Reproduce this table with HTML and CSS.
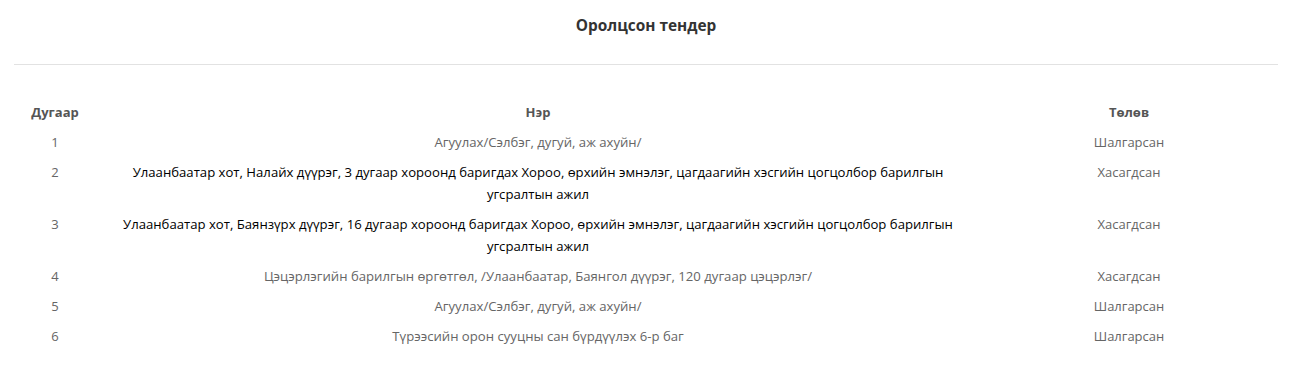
FILE: index.html
```html
<!DOCTYPE html>
<html lang="mn">
<head>
<meta charset="utf-8">
<title>Оролцсон тендер</title>
<link rel="stylesheet" href="styles.css">
</head>
<body>
<div class="panel">
  <h2 class="title">Оролцсон тендер</h2>
  <hr class="divider">
  <table class="tenders">
    <thead>
      <tr><th class="c-num">Дугаар</th><th class="c-name">Нэр</th><th class="c-status">Төлөв</th></tr>
    </thead>
    <tbody>
      <tr><td>1</td><td>Агуулах/Сэлбэг, дугуй, аж ахуйн/</td><td>Шалгарсан</td></tr>
      <tr class="dark"><td>2</td><td>Улаанбаатар хот, Налайх дүүрэг, 3 дугаар хороонд баригдах Хороо, өрхийн эмнэлэг, цагдаагийн хэсгийн цогцолбор барилгын угсралтын ажил</td><td>Хасагдсан</td></tr>
      <tr class="dark"><td>3</td><td>Улаанбаатар хот, Баянзүрх дүүрэг, 16 дугаар хороонд баригдах Хороо, өрхийн эмнэлэг, цагдаагийн хэсгийн цогцолбор барилгын угсралтын ажил</td><td>Хасагдсан</td></tr>
      <tr><td>4</td><td>Цэцэрлэгийн барилгын өргөтгөл, /Улаанбаатар, Баянгол дүүрэг, 120 дугаар цэцэрлэг/</td><td>Хасагдсан</td></tr>
      <tr><td>5</td><td>Агуулах/Сэлбэг, дугуй, аж ахуйн/</td><td>Шалгарсан</td></tr>
      <tr><td>6</td><td>Түрээсийн орон сууцны сан бүрдүүлэх 6-р баг</td><td>Шалгарсан</td></tr>
    </tbody>
  </table>
</div>
</body>
</html>
```
FILE: styles.css
```css
html, body {
  margin: 0;
  padding: 0;
  background: #fff;
}
body {
  font-family: "Open Sans", "Noto Sans", sans-serif;
  font-size: 13px;
  color: #666;
}
.panel {
  padding: 0 14px;
}
.title {
  margin: 0;
  padding-top: 13px;
  height: 25px;
  line-height: 25px;
  text-align: center;
  font-size: 15.4px;
  font-weight: 700;
  color: #333;
}
.divider {
  border: 0;
  border-top: 1px solid #e2e2e2;
  margin: 26px 0 0 0;
}
.tenders {
  width: 100%;
  border-collapse: collapse;
  margin-top: 32px;
}
.tenders th,
.tenders td {
  padding: 4px 8px;
  line-height: 22px;
  text-align: center;
  vertical-align: top;
}
.tenders th {
  font-weight: 700;
  color: #555;
}
.c-num { width: 66px; }
.c-status { width: 282px; }
.tenders td:nth-child(2) {
  font-size: 13.15px;
}
.tenders tr.dark td:nth-child(2) {
  color: #000;
}
```
